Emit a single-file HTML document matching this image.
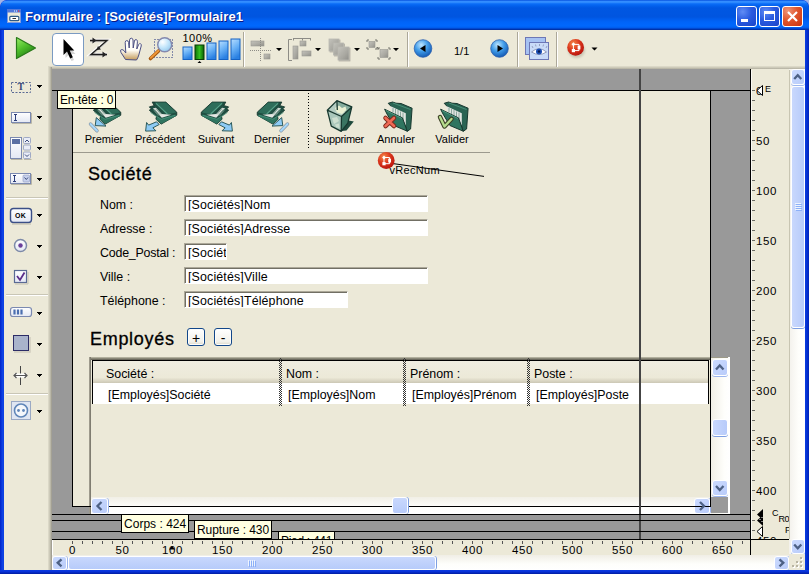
<!DOCTYPE html>
<html lang="fr">
<head>
<meta charset="utf-8">
<title>Formulaire : [Sociétés]Formulaire1</title>
<style>
*{box-sizing:border-box;margin:0;padding:0}
html,body{width:809px;height:574px;overflow:hidden;background:#a3b4e6}
body{position:relative;font-family:"Liberation Sans",sans-serif;font-size:11px;color:#000}
.a{position:absolute}
.t{position:absolute;white-space:nowrap;line-height:1}
#win{left:0;top:0;width:809px;height:574px;background:linear-gradient(to right,#0022c8 0,#0a3ce0 2px,#1046e6 3px,#0a3ce0 4px,#0a3ce0 805px,#0638dc 806px,#0022b8 809px);overflow:hidden;border-radius:7px 7px 0 0}
#title{left:0;top:0;width:809px;height:30px;border-radius:8px 8px 0 0;
 background:linear-gradient(to bottom,#0046d4 0,#2a84ff 1px,#3c96ff 2px,#1c7cfc 3px,#0a6cf6 4px,#0260ec 6px,#0057e2 8px,#0055e0 17px,#005cec 19px,#0064f8 22px,#0068fd 26px,#005eee 27.500px,#0048d0 28.500px,#0032a8 29.500px,#002c98 30px)}
#ttext{left:25px;top:10px;font-size:13px;font-weight:bold;color:#fff;text-shadow:1px 1px 0 #0a1883;letter-spacing:.08px}
.wb{position:absolute;top:6px;width:21px;height:21px;border:1px solid #fff;border-radius:3px;
 background:radial-gradient(circle at 30% 25%,#5f8cf5 0%,#2a5be0 45%,#1a43c8 100%)}
.wb.x{background:radial-gradient(circle at 25% 20%,#ee9478 0%,#e0562c 45%,#c8320f 100%)}
#client{left:4px;top:30px;width:801px;height:540px;background:#ece9d8}
#tbshadow{left:48px;top:66px;width:757px;height:4px;background:linear-gradient(to bottom,#e2dfce,#c6c3b2 50%,#97958a)}
.sep{position:absolute;top:32px;width:2px;height:36px;background:#aca899;border-right:1px solid #fff}
.dd{position:absolute;width:0;height:0;border-left:3px solid transparent;border-right:3px solid transparent;border-top:3px solid #000}
#work{left:52px;top:69px;width:698px;height:471px;background:#999;overflow:hidden}
.hl{position:absolute;height:1px;background:#000}
.vl{position:absolute;width:1px;background:#000}
.tip{position:absolute;background:#ffffe1;border:1px solid #000;font-size:12px;white-space:nowrap;line-height:18px;padding:0 2px;letter-spacing:-.2px;overflow:hidden}
.fld{position:absolute;height:17px;background:#fff;border-top:1px solid #aca899;border-left:1px solid #aca899;border-right:1px solid #fff;border-bottom:1px solid #fff;font-size:12.400px;letter-spacing:.15px;line-height:16px;white-space:nowrap;overflow:hidden}
.fld i{display:block;font-style:normal;border-top:1px solid #716f64;border-left:1px solid #716f64;height:15px;padding-left:2px}
.lbl{position:absolute;font-size:12.400px;white-space:nowrap;line-height:14px;margin-top:1px}
.btl{position:absolute;font-size:11px;white-space:nowrap;line-height:12px;text-align:center;width:60px}
.sbtn{position:absolute;background:linear-gradient(135deg,#cbdafe,#b9ccfa);border:1px solid #fff;border-radius:3px;box-shadow:0 1px 0 #9db6ee}
.sbtn.h{box-shadow:1px 0 0 #9db6ee}
.thumb{position:absolute;background:linear-gradient(to right,#c9d8fd,#b7cbfa);border:1px solid #fff;border-radius:3px;box-shadow:0 1px 0 #7e9fe2}
.thumbh{position:absolute;background:linear-gradient(to bottom,#c9d8fd,#b7cbfa);border:1px solid #fff;border-radius:3px;box-shadow:1px 0 0 #7e9fe2}
.pm{width:18px;height:18px;border:1px solid #12478a;border-radius:3px;background:linear-gradient(to bottom,#fff,#f2f1ea 80%,#d9d6c8);font-size:14px;line-height:19px;text-align:center;overflow:hidden;box-shadow:inset 0 0 0 1px #fdfdfb}
.cs{top:358px;width:3px;height:48px;background-image:linear-gradient(45deg,#333 25%,transparent 25%,transparent 75%,#333 75%),linear-gradient(45deg,#333 25%,transparent 25%,transparent 75%,#333 75%);background-size:2px 2px;background-position:0 0,1px 1px}
.rl{position:absolute;font-size:11.500px;line-height:1;white-space:nowrap;letter-spacing:.6px}
</style>
</head>
<body>
<div id="win" class="a">
 <div id="title" class="a"></div>
 <div id="ttext" class="t">Formulaire : [Sociétés]Formulaire1</div>
 <div class="wb" style="left:736px"></div>
 <div class="wb" style="left:759px"></div>
 <div class="wb x" style="left:782px"></div>
 <svg class="a" style="left:0;top:0" width="809" height="30" viewBox="0 0 809 30">
  <rect x="741" y="19" width="7" height="3" fill="#fff"/>
  <rect x="764.5" y="11.500" width="10" height="9" fill="none" stroke="#fff" stroke-width="1"/><rect x="764" y="11" width="11" height="3" fill="#fff"/>
  <path d="M788 12L797 21M797 12L788 21" stroke="#fff" stroke-width="2.200"/>
  <rect x="7.500" y="9.500" width="13" height="13" fill="#ece9d8" stroke="#7f9ae0"/>
  <rect x="7" y="9" width="14" height="3.500" fill="#4f78dc"/>
  <rect x="9.800" y="16.300" width="9" height="4.400" rx="1" fill="#fff" stroke="#2d5a88" stroke-width="1.200"/>
  <rect x="12.500" y="18" width="3.500" height="1" fill="#333"/>
  <rect x="18" y="10.500" width="1.200" height="1.200" fill="#f33"/><rect x="16" y="10.500" width="1" height="1" fill="#fff"/><rect x="14" y="10.500" width="1" height="1" fill="#fff"/>
 </svg>
 <div class="a" style="left:0;top:570px;width:809px;height:4px;background:linear-gradient(to bottom,#0a3ce0,#0831d9 40%,#001da0)"></div>
 <div id="client" class="a"></div>
 <div id="tbshadow" class="a"></div>
 <!-- toolbar -->
 <svg class="a" style="left:4px;top:30px" width="801" height="38" viewBox="4 30 801 38">
  <defs>
   <linearGradient id="gp" x1="0" y1="0" x2=".6" y2="1"><stop offset="0" stop-color="#9bee66"/><stop offset=".5" stop-color="#4fbf2c"/><stop offset="1" stop-color="#1f7a12"/></linearGradient>
   <linearGradient id="gb" x1="0" y1="0" x2=".35" y2="1"><stop offset="0" stop-color="#b9deff"/><stop offset=".5" stop-color="#6db4f7"/><stop offset="1" stop-color="#2a80e2"/></linearGradient>
   <linearGradient id="gg" x1="0" y1="0" x2="1" y2="0"><stop offset="0" stop-color="#0d7208"/><stop offset=".5" stop-color="#35c020"/><stop offset="1" stop-color="#0a5f06"/></linearGradient>
   <radialGradient id="gn" cx=".4" cy=".3" r=".8"><stop offset="0" stop-color="#bfe6ff"/><stop offset=".45" stop-color="#3f9be8"/><stop offset="1" stop-color="#0a4aa6"/></radialGradient>
   <radialGradient id="gl" cx=".35" cy=".3" r=".8"><stop offset="0" stop-color="#ffffff"/><stop offset=".5" stop-color="#c4e6fb"/><stop offset="1" stop-color="#8ec4ea"/></radialGradient>
   <linearGradient id="gd" x1="0" y1="0" x2="1" y2="1"><stop offset="0" stop-color="#c4c3bc"/><stop offset=".6" stop-color="#a9a8a1"/><stop offset="1" stop-color="#8f8e88"/></linearGradient><filter id="ds" x="-30%" y="-30%" width="170%" height="170%"><feDropShadow dx="1" dy="1" stdDeviation=".7" flood-color="#6a6960" flood-opacity=".45"/></filter>
   <linearGradient id="gh" x1="0" y1="0" x2="0" y2="1"><stop offset="0" stop-color="#fff"/><stop offset=".55" stop-color="#fffdf6"/><stop offset="1" stop-color="#c39a5a"/></linearGradient>
   <radialGradient id="rb2" cx=".36" cy=".28" r=".8"><stop offset="0" stop-color="#f58a4a"/><stop offset=".45" stop-color="#dc3a1e"/><stop offset=".85" stop-color="#c01a10"/><stop offset="1" stop-color="#a30d0d"/></radialGradient><filter id="bl" x="-50%" y="-50%" width="200%" height="200%"><feGaussianBlur stdDeviation="1.300"/></filter>
  </defs>
  <!-- play -->
  <path d="M16.5 37.5 L35.5 48 L16.5 58.5 Z" fill="url(#gp)" stroke="#2a7a1a" stroke-width="1.2" stroke-linejoin="round"/>
  <!-- selected arrow button -->
  <rect x="52.5" y="33.5" width="31" height="32" rx="3.5" fill="#fff" stroke="#7a9ac2"/>
  <path d="M65.5 43 L65.5 58 L68.6 55 L71.5 61 L74 60 L71.2 54 L75.5 54 Z" fill="#b9b9b9" opacity=".6"/>
  <path d="M63.5 39 L63.5 55 L67 51.6 L70.2 58.5 L72.8 57.3 L69.7 50.6 L74.3 50.4 Z" fill="#000"/>
  <!-- Z tool -->
  <g stroke="#fff" stroke-width="3.600" fill="none"><path d="M90 40.500H107L91 54.500H107"/></g>
  <g stroke="#b5b4aa" stroke-width="2.400" fill="none" opacity=".7"><path d="M90 41H107L91 55H107"/></g>
  <g stroke="#1c1c1c" stroke-width="1.300" fill="none"><path d="M90 40.500H107L91 54.500H107"/></g>
  <path d="M96.5 40.5 L92.5 37.5 V43.5 Z M96.5 50 L101 49.5 L98 46 Z M106.5 54.5 L102.5 51.5 V57.5 Z" fill="#222"/>
  <!-- hand -->
  <path d="M125.5 59.5 L121 52.5 Q119.5 49.5 122 49.5 Q124 49.8 125.8 53 L125.2 42.5 Q125.3 40.6 126.8 40.6 Q128.3 40.6 128.6 42.5 L129.2 48 L129.6 40 Q129.8 38.2 131.3 38.2 Q132.8 38.2 133 40 L133.2 48 L134.4 41 Q134.8 39.4 136.2 39.6 Q137.6 39.9 137.4 41.8 L136.8 49 L138.6 44.6 Q139.4 43.2 140.5 43.7 Q141.6 44.3 141.2 46 L138.8 55 Q138 58 136.5 60 Z" fill="url(#gh)" stroke="#4b4f83" stroke-width="1"/>
  <!-- magnifier -->
  <rect x="154.5" y="39.5" width="18" height="18" fill="none" stroke="#1b2a7a" stroke-width="1" stroke-dasharray="1 2"/>
  <path d="M158.5 51 L150.5 58.5" stroke="#a85a10" stroke-width="3.6" stroke-linecap="round"/>
  <path d="M158.5 50.6 L150.8 57.8" stroke="#f29a3a" stroke-width="1.8" stroke-linecap="round"/>
  <circle cx="164.7" cy="44.8" r="7" fill="url(#gl)" stroke="#8589ad" stroke-width="1.4"/>
  <!-- zoom bars -->
  <rect x="183" y="47" width="9" height="12.500" fill="url(#gb)" stroke="#1562c4"/>
  <rect x="195" y="45" width="9" height="14.500" fill="url(#gg)" stroke="#063d04"/>
  <rect x="207" y="43" width="9" height="16.500" fill="url(#gb)" stroke="#1562c4"/>
  <rect x="219" y="41" width="9" height="18.500" fill="url(#gb)" stroke="#1562c4"/>
  <rect x="231" y="39" width="9" height="20.500" fill="url(#gb)" stroke="#1562c4"/>
  <path d="M197.5 63 L199.5 61 L201.5 63 Z" fill="#000"/>
  <!-- separators -->
  <g stroke="#aca899"><path d="M243.5 32V67M407.5 32V67M517.5 32V67M556.5 32V67"/></g>
  <g stroke="#fff"><path d="M244.5 32V67M408.5 32V67M518.5 32V67M557.5 32V67"/></g>
  <!-- align (disabled) -->
  <g fill="url(#gd)" stroke="#9a9993" stroke-width=".6">
   <rect x="251" y="41" width="13" height="5"/><rect x="264" y="54" width="6" height="5"/>
  </g>
  <path d="M260.5 38V62M250 50.5H272" stroke="#8d8c86" stroke-dasharray="1 1" fill="none"/>
  <!-- distribute (disabled) -->
  <path d="M292 39.500H288.500V60.500H292M293 38.500H311M293.500 38.500V40.500M302.500 38.500V40.500M310.500 38.500V40.500" stroke="#8d8c86" fill="none"/>
  <g fill="url(#gd)" stroke="#9a9993" stroke-width=".6">
   <rect x="293" y="46" width="5" height="13"/><rect x="300" y="41" width="6" height="5"/><rect x="302" y="51" width="9" height="5"/>
  </g>
  <!-- layers (disabled) -->
  <g fill="url(#gd)" stroke="#b9b8b1" stroke-width=".8" filter="url(#ds)">
   <rect x="329" y="39" width="10" height="12"/><rect x="333.5" y="43" width="10" height="12"/><rect x="338" y="47" width="11" height="13"/>
  </g>
  <!-- group (disabled) -->
  <g fill="url(#gd)" stroke="#9a9993" stroke-width=".6">
   <rect x="369" y="41.5" width="6" height="6"/><rect x="380" y="49.5" width="8" height="8"/>
  </g>
  <path d="M367 42V40H369M375 40H377V42M367 47V49H369M375 49H377V47 M378 50V48H380M388 48H390V50M378 57V59H380M388 59H390V57 M377 47L379 49" stroke="#77766f" fill="none"/>
  <!-- dropdown arrows -->
  <path d="M276 48H282L279 51ZM315 48H321L318 51ZM354 48H360L357 51ZM393 48H399L396 51ZM591.500 47.500H597.500L594.500 50.500Z" fill="#000"/>
  <!-- nav -->
  <circle cx="423" cy="48.5" r="8.8" fill="url(#gn)" stroke="#2b5fae" stroke-width=".8"/>
  <path d="M425.5 45 V52 L420 48.5 Z" fill="#000"/>
  <circle cx="499.5" cy="48.5" r="8.8" fill="url(#gn)" stroke="#2b5fae" stroke-width=".8"/>
  <path d="M497.5 45 V52 L503 48.5 Z" fill="#000"/>
  <!-- eye -->
  <rect x="525.500" y="37.500" width="20" height="17" fill="#a6c2f2" stroke="#6d77b5"/>
  <rect x="529.500" y="42.500" width="19" height="17" fill="#c9dbf8" stroke="#6d77b5"/>
  <path d="M531.500 52Q539 45.500 546.500 52Q539 57 531.500 52Z" fill="#fff" stroke="#7e86a8" stroke-width=".8"/>
  <circle cx="539" cy="51.500" r="3" fill="#1c4fb5"/><circle cx="539" cy="51.500" r="1.200" fill="#081b4d"/>
  <path d="M533 48L532 46M536 46.5L535.5 44.5M539.5 46V44M543 46.5L543.5 44.5M546 48L547 46" stroke="#7e86a8" stroke-width=".7"/>
  <!-- red ball -->
  <ellipse cx="576.500" cy="50.500" rx="8.500" ry="7.500" fill="#8a8672" opacity=".35" filter="url(#bl)"/>
  <circle cx="575.600" cy="47.400" r="8.400" fill="url(#rb2)"/>
  <g id="ballg"><path d="M573.400 44.400H579V50.600H573.400M573.400 44V51" stroke="#fff" stroke-width="1" fill="none"/>
  <path d="M573.400 42.300L575.300 44.300L573.400 46.300L571.500 44.300Z" fill="#fff"/><rect x="571.800" y="49" width="3.200" height="3.200" fill="#fff"/><rect x="577.600" y="45.600" width="2.800" height="3.800" fill="#fff"/></g>
 </svg>
 <div class="t" style="left:182.500px;top:33px;font-size:11px;letter-spacing:.5px">100%</div>
 <div class="t" style="left:454px;top:46px;font-size:11px">1/1</div>
 <!-- palette -->
 <svg class="a" style="left:4px;top:69px" width="44" height="501" viewBox="4 69 44 501">
  <defs>
   <linearGradient id="pbx" x1="0" y1="0" x2="0" y2="1"><stop offset="0" stop-color="#fff"/><stop offset="1" stop-color="#e4e8f4"/></linearGradient>
  </defs>
  <!-- arrows -->
  <path d="M37 85h5v1h-1v1h-1v1h-1v-1h-1v-1h-1zM37 116h5v1h-1v1h-1v1h-1v-1h-1v-1h-1zM37 147h5v1h-1v1h-1v1h-1v-1h-1v-1h-1zM37 178h5v1h-1v1h-1v1h-1v-1h-1v-1h-1zM37 214h5v1h-1v1h-1v1h-1v-1h-1v-1h-1zM37 245h5v1h-1v1h-1v1h-1v-1h-1v-1h-1zM37 276h5v1h-1v1h-1v1h-1v-1h-1v-1h-1zM37 312h5v1h-1v1h-1v1h-1v-1h-1v-1h-1zM37 343h5v1h-1v1h-1v1h-1v-1h-1v-1h-1zM37 374h5v1h-1v1h-1v1h-1v-1h-1v-1h-1zM37 410h5v1h-1v1h-1v1h-1v-1h-1v-1h-1z" fill="#000"/>
  <!-- separators -->
  <g stroke="#c9c6b6"><path d="M6 197.5H48M6 294.5H48M6 393.5H48"/></g>
  <g stroke="#fff"><path d="M6 198.5H48M6 295.5H48M6 394.5H48"/></g>
  <!-- 1 text -->
  <rect x="11.5" y="82.5" width="19" height="10" fill="none" stroke="#5a6a94" stroke-dasharray="2 1.5"/>
  <!-- 2 input -->
  <rect x="11.5" y="112.5" width="19" height="10" fill="url(#pbx)" stroke="#7b89b0"/>
  <path d="M12 123.5H31.5V113" stroke="#b9b6a6" fill="none"/>
  <path d="M14 114.5H17M14 120.5H17M15.5 114.5V120.5" stroke="#2c3e7a" fill="none"/>
  <!-- 3 listbox -->
  <rect x="10.500" y="137.500" width="11" height="21" fill="url(#pbx)" stroke="#7b89b0"/>
  <rect x="12" y="139" width="8" height="5" fill="#5a6fa3"/>
  <g fill="#e9ecf6" stroke="#8d99bd" stroke-width=".8"><rect x="23.500" y="137.500" width="7" height="6" rx="1"/><rect x="23.500" y="145" width="7" height="5" rx="1"/><rect x="23.500" y="152" width="7" height="6.500" rx="1"/></g>
  <path d="M25 142L27 140L29 142M25 154.500L27 156.500L29 154.500" stroke="#3c4c7c" fill="none"/>
  <path d="M11 159.500H22.500M24 159.500H31.500" stroke="#b9b6a6"/>
  <!-- 4 combo -->
  <rect x="10.500" y="173.500" width="20" height="10" fill="url(#pbx)" stroke="#7b89b0"/>
  <rect x="23" y="175" width="6.500" height="7" rx="1" fill="#c6d0ec" stroke="#8d99bd" stroke-width=".6"/>
  <path d="M24.500 177.500L26.300 179.500L28 177.500" stroke="#3c4c7c" fill="none"/>
  <path d="M13 175.500H16M13 181.500H16M14.500 175.500V181.500" stroke="#2c3e7a" fill="none"/>
  <path d="M11 184.500H31.500V174" stroke="#b9b6a6" fill="none"/>
  <!-- 5 ok button -->
  <rect x="10.500" y="208.500" width="21" height="14" rx="3" fill="url(#pbx)" stroke="#3b4f87" stroke-width="1.400"/>
  <path d="M12 224H31" stroke="#b9b6a6"/>
  <!-- 6 radio -->
  <circle cx="20.500" cy="245.500" r="6" fill="url(#pbx)" stroke="#7d8aa8" stroke-width="1.500"/>
  <circle cx="20.500" cy="245.500" r="2.200" fill="#6a3f9a"/>
  <!-- 7 checkbox -->
  <rect x="14.500" y="270.500" width="12" height="12" fill="url(#pbx)" stroke="#5a6a94" stroke-width="1.200"/>
  <path d="M15 284H28V272" stroke="#c4c1b1" fill="none"/>
  <path d="M17 276L20 280L24.500 272.500" stroke="#5b2d8a" stroke-width="1.800" fill="none"/>
  <!-- 8 progress -->
  <rect x="10.500" y="307.500" width="21" height="9" rx="2.500" fill="url(#pbx)" stroke="#7b89b0" stroke-width="1.200"/>
  <path d="M14.500 309.500V314.500M18 309.500V314.500M21.500 309.500V314.500" stroke="#4b6fb0" stroke-width="2.200"/>
  <!-- 9 square -->
  <rect x="13.500" y="335.500" width="15" height="15" fill="#a9b3cb" stroke="#2c2c66" stroke-width="1"/>
  <path d="M14 352H30V337" stroke="#cfccbd" fill="none" stroke-width="1.500"/>
  <!-- 10 splitter -->
  <path d="M20.500 366V385" stroke="#444"/>
  <path d="M14 375.500H27" stroke="#fff" stroke-width="4"/>
  <path d="M14.500 375.500H26.500M16.500 373L14 375.500L16.500 378M24.500 373L27 375.500L24.500 378" stroke="#555" fill="none" stroke-width="1.200"/>
  <!-- 11 plugin -->
  <rect x="11.500" y="401.500" width="19" height="18" fill="#dfe6f2" stroke="#9aa9c4"/>
  <circle cx="21" cy="410.500" r="6.500" fill="#f4f7fb" stroke="#5f86b8" stroke-width="1.600"/>
  <circle cx="18.500" cy="410.500" r="1.400" fill="#5f86b8"/><circle cx="23.500" cy="410.500" r="1.400" fill="#5f86b8"/>
 </svg>
 <div class="t" style="left:17.500px;top:82px;font-size:10px;font-weight:bold;font-family:'Liberation Serif',serif;color:#3b4a78">T</div>
 <div class="t" style="left:15px;top:212px;font-size:7px;font-weight:bold;letter-spacing:.3px">OK</div>
 <div class="a" style="left:52px;top:69px;width:698px;height:471px;background:#999"></div>
 <div class="a" style="left:48px;top:67px;width:4px;height:503px;background:linear-gradient(to right,#e2dfce,#c6c3b2 50%,#97958a)"></div>
 <!-- form page -->
 <div class="a" style="left:73px;top:91px;width:637px;height:415px;background:#ece9d8"></div>
 <div class="hl" style="left:52px;top:90px;width:698px"></div>
 <div class="vl" style="left:72px;top:90px;height:417px"></div>
 <!-- header buttons -->
 <svg class="a" style="left:72px;top:91px" width="420" height="62" viewBox="72 91 420 62">
  <defs>
   <linearGradient id="gf" x1="0" y1="0" x2="1" y2="1"><stop offset="0" stop-color="#3f8a73"/><stop offset="1" stop-color="#1d4d40"/></linearGradient>
   <g id="fold">
    <path d="M3.2 1.100L16.800 1.100L27.750 11.200L27.750 14.200L12.200 23.100L6.900 18.200L7.500 15.500L0.300 9.200L2.300 7.900L0.300 5.900L5.200 4.600Z" fill="#1f4f42" stroke="#17382f" stroke-width=".9" stroke-linejoin="round"/>
    <path d="M5.900 1.600L16.800 1.400L27.300 11.500L17.500 13.400Z" fill="#2e6d5a"/>
    <path d="M7 2.300L18.300 12.800" stroke="#5aa58c" stroke-width="1.100"/>
    <path d="M3.900 7.600L6.900 6.700L12.800 13L22.500 13.700L12.800 16.700Z" fill="#e3e6e2"/>
    <path d="M5.500 8.200L10.500 14.300M7 7.600L11.800 13.300M4.800 9.300L9.400 14.800" stroke="#6d9485" stroke-width=".8"/>
    <path d="M0.900 10.700L12.200 17.800L26.400 13.600L27.300 15L12.200 22.700L7.300 18.400L8 15.700Z" fill="#2f7560"/>
    <path d="M1.500 11.500L12.200 18.300L26 14.300" stroke="#4f9a82" stroke-width=".7" fill="none"/>
   </g>
   <g id="foldr"><use href="#fold" transform="translate(28,0) scale(-1,1)"/></g>
   <g id="fold2">
    <path d="M4.200 2.300L8.600 1L12 2.200L17 2.500L28.100 7.200L26.600 28L23.100 30.400L20 19Z" fill="#2a6453" stroke="#17382f" stroke-width="1" stroke-linejoin="round"/>
    <path d="M9 2L26.500 8.500" stroke="#4f9a82" stroke-width=".8"/>
    <path d="M6.200 4.900L21.800 12.200L21.800 25L18.500 16.900L7.600 10.900Z" fill="#e1e5e1"/>
    <path d="M9 7V11.500M11.500 8V13M14 9V14.500M16.500 10.500V16M19 11.500V18" stroke="#8aa89c" stroke-width="1"/>
    <path d="M0.600 8.200L18.500 16.900L23.100 30.100L9.900 24.500L3 13Z" fill="#2f7560" stroke="#17382f" stroke-width="1" stroke-linejoin="round"/>
    <path d="M2 9.500L18 17.500" stroke="#5aa58c" stroke-width=".8"/>
   </g>
  </defs>
  <!-- Premier -->
  <use href="#fold" x="93" y="101"/>
  <path d="M96.300 117.600L95.200 125.600L106 126.100Z" fill="#8ecbf5" stroke="#1d4d4d" stroke-width=".9" stroke-linejoin="round"/>
  <path d="M90.500 124L97 130.700" stroke="#8a9aa8" stroke-width="3.400" stroke-linecap="round"/>
  <path d="M90.500 124L97 130.700" stroke="#a6d8fb" stroke-width="2" stroke-linecap="round"/>
  <!-- Précédent -->
  <use href="#fold" x="149" y="101"/>
  <path d="M145.600 131.100L146.600 122.500L148.600 125.100L156.500 121.800L159.200 124.500L152.900 127.800L155.900 130.800Z" fill="#8ecbf5" stroke="#1d4d4d" stroke-width=".9" stroke-linejoin="round"/>
  <!-- Suivant -->
  <use href="#foldr" x="201" y="101"/>
  <path d="M232.4 131.1L231.4 122.5L229.4 125.1L221.5 121.8L218.8 124.5L225.1 127.8L222.1 130.8Z" fill="#8ecbf5" stroke="#1d4d4d" stroke-width=".9" stroke-linejoin="round"/>
  <!-- Dernier -->
  <use href="#foldr" x="257" y="101"/>
  <path d="M281.7 117.6L282.8 125.6L272.0 126.1Z" fill="#8ecbf5" stroke="#1d4d4d" stroke-width=".9" stroke-linejoin="round"/>
  <path d="M287.5 124.0L281.0 130.7" stroke="#8a9aa8" stroke-width="3.400" stroke-linecap="round"/>
  <path d="M287.5 124.0L281.0 130.7" stroke="#a6d8fb" stroke-width="2" stroke-linecap="round"/>
  <!-- dotted sep -->
  <path d="M308.5 93 V148" stroke="#000" stroke-width="1" stroke-dasharray="1 2"/>
  <!-- Supprimer: trash -->
  <path d="M348.500 120.500L353.800 121.500L346.500 130.400L341.500 131Z" fill="#1f4a3d"/>
  <path d="M327.300 110.200L336.900 100.600L351.800 106.900L341.500 116.500Z" fill="#b4cdc2"/>
  <path d="M336.900 100.600L351.800 106.900L346 112L338 112Z" fill="#86ad9e"/>
  <path d="M335 108L339 105.500L342 108L345.500 106.500L346.500 110L342 114L337 112.500Z" fill="#e9f0d2"/>
  <path d="M327.300 110.200L341.500 116.500L341.200 131.400L331.300 126.100Z" fill="#a9c7bb"/>
  <path d="M332 118L337 117L339 121L334 124ZM335 124.500L339 123.500L339.500 128L336 127Z" fill="#d6e5d6" opacity=".8"/>
  <path d="M341.500 116.500L351.800 106.900L347.800 123.200L341.200 131.400Z" fill="#3a7562"/>
  <path d="M327.300 110.200L336.900 100.600L351.800 106.900L347.800 123.200L341.200 131.400L331.300 126.100ZM327.300 110.200L341.500 116.500L351.800 106.900M341.500 116.500L341.200 131.400M336.900 100.600L337.300 110" fill="none" stroke="#17382f" stroke-width="1.300" stroke-linejoin="round"/>
  <!-- Annuler -->
  <use href="#fold2" x="384" y="101"/>
  <path d="M385.500 118L394 126M394 118L385.500 126" stroke="#7a2a1c" stroke-width="4.5" stroke-linecap="round"/>
  <path d="M385.500 118L394 126M394 118L385.500 126" stroke="#ef6a55" stroke-width="2.6" stroke-linecap="round"/>
  <!-- Valider -->
  <use href="#fold2" x="440" y="101"/>
  <path d="M440 117L444.500 126.500L451.500 119" fill="none" stroke="#3a3f24" stroke-width="4.5" stroke-linejoin="round" stroke-linecap="round"/>
  <path d="M440 117L444.500 126.500L451.500 119" fill="none" stroke="#b5db8c" stroke-width="2.4" stroke-linejoin="round" stroke-linecap="round"/>
  <!-- rule -->
  <path d="M73 152.500H490" stroke="#9c9a8e" stroke-width="1"/><path d="M73 153.500H490" stroke="#fbfaf5" stroke-width="1"/>
 </svg>
 <div class="btl" style="left:74px;top:133px">Premier</div>
 <div class="btl" style="left:130px;top:133px">Précédent</div>
 <div class="btl" style="left:186px;top:133px">Suivant</div>
 <div class="btl" style="left:242px;top:133px">Dernier</div>
 <div class="btl" style="left:310px;top:133px;letter-spacing:-.33px">Supprimer</div>
 <div class="btl" style="left:366px;top:133px">Annuler</div>
 <div class="btl" style="left:422px;top:133px">Valider</div>
 <!-- vRecNum -->
 <div class="t" style="left:389.500px;top:165px;font-size:11px;letter-spacing:.3px">vRecNum</div>
 <svg class="a" style="left:376px;top:150px" width="112" height="30" viewBox="376 150 112 30">
  <defs><radialGradient id="rb" cx=".38" cy=".3" r=".75"><stop offset="0" stop-color="#ff8d78"/><stop offset=".45" stop-color="#e2321c"/><stop offset="1" stop-color="#8e1206"/></radialGradient></defs>
  <path d="M391 163.3 L484 176.4" stroke="#000" stroke-width="1"/>
  <circle cx="386.200" cy="160.500" r="8.400" fill="url(#rb2)"/>
  <use href="#ballg" transform="translate(-189.400,113.100)"/>
 </svg>
 <!-- Société -->
 <div class="t" style="left:88px;top:165px;font-size:18px;letter-spacing:.6px;-webkit-text-stroke:.3px #000">Société</div>
 <div class="lbl" style="left:100px;top:197px">Nom :</div>
 <div class="lbl" style="left:100px;top:221px">Adresse :</div>
 <div class="lbl" style="left:100px;top:245px;letter-spacing:-.2px">Code_Postal :</div>
 <div class="lbl" style="left:100px;top:269px">Ville :</div>
 <div class="lbl" style="left:100px;top:293px">Téléphone :</div>
 <div class="fld" style="left:184px;top:195px;width:244px"><i>[Sociétés]Nom</i></div>
 <div class="fld" style="left:184px;top:219px;width:244px"><i>[Sociétés]Adresse</i></div>
 <div class="fld" style="left:184px;top:243px;width:43px"><i><span style="display:block;width:38px;overflow:hidden">[Sociétés]Code_Postal</span></i></div>
 <div class="fld" style="left:184px;top:267px;width:244px"><i>[Sociétés]Ville</i></div>
 <div class="fld" style="left:184px;top:291px;width:164px"><i>[Sociétés]Téléphone</i></div>
 <!-- Employés -->
 <div class="t" style="left:90px;top:330px;font-size:18px;letter-spacing:.7px;-webkit-text-stroke:.3px #000">Employés</div>
 <div class="a pm" style="left:187px;top:328px">+</div>
 <div class="a pm" style="left:214px;top:328px">-</div>
 <!-- list box -->
 <div class="a" style="left:89px;top:357px;width:622px;height:3px;background:linear-gradient(to bottom,#c5c2b0,#8a8878 50%,#5c5a50)"></div>
 <div class="a" style="left:89px;top:357px;width:2px;height:158px;background:linear-gradient(to right,#aca899,#716f64)"></div>
 <div class="a" style="left:93px;top:361px;width:615px;height:22px;background:linear-gradient(to bottom,#efede0 0%,#ece9d8 75%,#dcd8c6 88%,#cbc7b5 100%)"></div>
 <div class="a" style="left:93px;top:383px;width:615px;height:21px;background:#fff"></div>
 <div class="hl" style="left:92px;top:360px;width:617px"></div>
 <div class="vl" style="left:92px;top:360px;height:44px"></div>
 <div class="vl" style="left:708px;top:360px;height:44px"></div>
 <div class="a cs" style="left:279px"></div>
 <div class="a cs" style="left:403px"></div>
 <div class="a cs" style="left:527px"></div>
 <div class="lbl" style="left:106px;top:366px">Société :</div>
 <div class="lbl" style="left:286px;top:366px">Nom :</div>
 <div class="lbl" style="left:410px;top:366px">Prénom :</div>
 <div class="lbl" style="left:534px;top:366px">Poste :</div>
 <div class="lbl" style="left:108px;top:387px">[Employés]Société</div>
 <div class="lbl" style="left:288px;top:387px">[Employés]Nom</div>
 <div class="lbl" style="left:412px;top:387px">[Employés]Prénom</div>
 <div class="lbl" style="left:536px;top:387px">[Employés]Poste</div>
 <!-- list vscroll -->
 <div class="a" style="left:711px;top:357px;width:19px;height:158px;background:linear-gradient(to right,#f1efe6,#fefefb 70%,#fff)"></div>
 <div class="a" style="left:711px;top:357px;width:17px;height:1px;background:#9d9a88"></div>
 <div class="a" style="left:711px;top:497px;width:17px;height:16px;background:#999"></div>
 <div class="sbtn" style="left:712px;top:359px;width:16px;height:17px"></div>
 <div class="sbtn" style="left:712px;top:480px;width:16px;height:16px"></div>
 <div class="thumb" style="left:712px;top:419px;width:16px;height:17px"></div>
 <svg class="a" style="left:712px;top:359px" width="16" height="138" viewBox="712 359 16 138"><path d="M716 369.500L719.750 365.500L723.500 369.500M716 486L719.750 490L723.500 486" fill="none" stroke="#4d6185" stroke-width="2.300"/></svg>
 <!-- list hscroll -->
 <div class="a" style="left:91px;top:497px;width:620px;height:17px;background:linear-gradient(to bottom,#f1efe6,#fefefb 60%,#fff)"></div>
 <div class="hl" style="left:72px;top:506px;width:639px"></div>
 <div class="sbtn h" style="left:91px;top:498px;width:17px;height:16px"></div>
 <div class="sbtn h" style="left:694px;top:498px;width:16px;height:16px"></div>
 <div class="hl" style="left:694px;top:506px;width:17px"></div>
 <div class="thumbh" style="left:392px;top:497px;width:16px;height:17px"></div>
 <svg class="a" style="left:91px;top:498px" width="620" height="16" viewBox="91 498 620 16"><path d="M101.500 502L97.500 506L101.500 510M700 502L704 506L700 510" fill="none" stroke="#4d6185" stroke-width="2.300"/></svg>
 <div class="vl" style="left:710px;top:90px;height:417px"></div>
 <!-- section markers -->
 <div class="a" style="left:640px;top:69px;width:2px;height:470px;background:#444;margin-left:-1px"></div>
 <div class="hl" style="left:52px;top:514px;width:698px"></div>
 <div class="hl" style="left:52px;top:520px;width:698px"></div>
 <div class="hl" style="left:52px;top:531px;width:698px"></div>
 <div class="tip" style="left:57px;top:90px;height:19px">En-tête : 0</div>
 <div class="tip" style="left:121px;top:514px;height:19px;letter-spacing:.02px">Corps : 424</div>
 <div class="tip" style="left:194px;top:520px;height:19px;letter-spacing:-.05px">Rupture : 430</div>
 <div class="tip" style="left:278px;top:531px;height:19px;letter-spacing:-.3px">Pied : 441</div>
 <div class="a" style="left:52px;top:539px;width:738px;height:17px;background:#ece9d8"></div>
 <div class="hl" style="left:52px;top:539px;width:738px"></div>
 <div class="a" style="left:52px;top:540px;width:1px;height:15px;background:#fff"></div>
 <div class="a" style="left:52px;top:555px;width:738px;height:1px;background:#fff"></div>
 <svg class="a" style="left:52px;top:540px" width="698" height="5" viewBox="52 540 698 5"><path d="M72.5 541V544M82.5 541V544M92.5 541V544M102.5 541V544M112.5 541V544M122.5 541V544M132.5 541V544M142.5 541V544M152.5 541V544M162.5 541V544M172.5 541V544M182.5 541V544M192.5 541V544M202.5 541V544M212.5 541V544M222.5 541V544M232.5 541V544M242.5 541V544M252.5 541V544M262.5 541V544M272.5 541V544M282.5 541V544M292.5 541V544M302.5 541V544M312.5 541V544M322.5 541V544M332.5 541V544M342.5 541V544M352.5 541V544M362.5 541V544M372.5 541V544M382.5 541V544M392.5 541V544M402.5 541V544M412.5 541V544M422.5 541V544M432.5 541V544M442.5 541V544M452.5 541V544M462.5 541V544M472.5 541V544M482.5 541V544M492.5 541V544M502.5 541V544M512.5 541V544M522.5 541V544M532.5 541V544M542.5 541V544M552.5 541V544M562.5 541V544M572.5 541V544M582.5 541V544M592.5 541V544M602.5 541V544M612.5 541V544M622.5 541V544M632.5 541V544M642.5 541V544M652.5 541V544M662.5 541V544M672.5 541V544M682.5 541V544M692.5 541V544M702.5 541V544M712.5 541V544M722.5 541V544M732.5 541V544M742.5 541V544" stroke="#555" stroke-width="1"/></svg>
 <div class="rl" style="left:72px;top:545px;width:40px;text-align:center;margin-left:-19.5px">0</div>
 <div class="rl" style="left:122px;top:545px;width:40px;text-align:center;margin-left:-19.5px">50</div>
 <div class="rl" style="left:172px;top:545px;width:40px;text-align:center;margin-left:-19.5px">100</div>
 <div class="rl" style="left:222px;top:545px;width:40px;text-align:center;margin-left:-19.5px">150</div>
 <div class="rl" style="left:272px;top:545px;width:40px;text-align:center;margin-left:-19.5px">200</div>
 <div class="rl" style="left:322px;top:545px;width:40px;text-align:center;margin-left:-19.5px">250</div>
 <div class="rl" style="left:372px;top:545px;width:40px;text-align:center;margin-left:-19.5px">300</div>
 <div class="rl" style="left:422px;top:545px;width:40px;text-align:center;margin-left:-19.5px">350</div>
 <div class="rl" style="left:472px;top:545px;width:40px;text-align:center;margin-left:-19.5px">400</div>
 <div class="rl" style="left:522px;top:545px;width:40px;text-align:center;margin-left:-19.5px">450</div>
 <div class="rl" style="left:572px;top:545px;width:40px;text-align:center;margin-left:-19.5px">500</div>
 <div class="rl" style="left:622px;top:545px;width:40px;text-align:center;margin-left:-19.5px">550</div>
 <div class="rl" style="left:672px;top:545px;width:40px;text-align:center;margin-left:-19.5px">600</div>
 <div class="rl" style="left:722px;top:545px;width:40px;text-align:center;margin-left:-19.5px">650</div>
 <svg class="a" style="left:167px;top:545px" width="10" height="5" viewBox="0 0 10 5"><path d="M2 4.5 L5 1 L8 4.5 Z" fill="#000"/></svg>
 <div class="a" style="left:750px;top:69px;width:40px;height:470px;background:#ece9d8"></div>
 <div class="vl" style="left:750px;top:69px;height:487px"></div>
 <div class="a" style="left:751px;top:70px;width:1px;height:469px;background:#fbfaf4"></div>
 <svg class="a" style="left:751px;top:69px" width="8" height="470" viewBox="751 69 8 470"><path d="M752 90.5H755M752 100.5H755M752 110.5H755M752 120.5H755M752 130.5H755M752 140.5H755M752 150.5H755M752 160.5H755M752 170.5H755M752 180.5H755M752 190.5H755M752 200.5H755M752 210.5H755M752 220.5H755M752 230.5H755M752 240.5H755M752 250.5H755M752 260.5H755M752 270.5H755M752 280.5H755M752 290.5H755M752 300.5H755M752 310.5H755M752 320.5H755M752 330.5H755M752 340.5H755M752 350.5H755M752 360.5H755M752 370.5H755M752 380.5H755M752 390.5H755M752 400.5H755M752 410.5H755M752 420.5H755M752 430.5H755M752 440.5H755M752 450.5H755M752 460.5H755M752 470.5H755M752 480.5H755M752 490.5H755M752 500.5H755M752 510.5H755M752 520.5H755M752 530.5H755" stroke="#6a6a64" stroke-width="1"/></svg>
 <div class="rl" style="left:756px;top:136px">50</div>
 <div class="rl" style="left:756px;top:186px">100</div>
 <div class="rl" style="left:756px;top:236px">150</div>
 <div class="rl" style="left:756px;top:286px">200</div>
 <div class="rl" style="left:756px;top:336px">250</div>
 <div class="rl" style="left:756px;top:386px">300</div>
 <div class="rl" style="left:756px;top:436px">350</div>
 <div class="rl" style="left:756px;top:486px">400</div>
 <!-- ruler markers -->
 <div class="rl" style="left:756px;top:86px">0</div>
 <div class="a" style="left:751px;top:509px;width:38px;height:30px;overflow:hidden">
  <div class="rl" style="left:5px;top:27px">450</div>
 </div>
 <svg class="a" style="left:751px;top:80px" width="39" height="460" viewBox="751 80 39 460">
  <path d="M757 90.500L762.500 85.500V95.500Z" fill="#fff" stroke="#000"/>
  <path d="M757 514.500L763 509V520Z" fill="#000"/>
  <path d="M757 520.500L763 515V526Z" fill="#000"/>
  <path d="M759.500 519.500h1M761.500 517.500h1M761.500 521.500h1" stroke="#fff"/>
  <path d="M757 531.500L762.500 526.500V536.500Z" fill="#fff" stroke="#000"/>
 </svg>
 <div class="t" style="left:765px;top:85px;font-size:9px">E</div>
 <div class="t" style="left:772px;top:509px;font-size:9px">C</div>
 <div class="a" style="left:751px;top:500px;width:39px;height:39px;overflow:hidden"><div class="t" style="left:27.500px;top:15px;font-size:9px;letter-spacing:-.6px">R0</div><div class="t" style="left:34px;top:26px;font-size:9px">P</div></div>
 <!-- main vscroll -->
 <div class="a" style="left:789px;top:69px;width:16px;height:487px;background:linear-gradient(to right,#f3f1ec,#fefefb 60%,#fff)"></div>
 <div class="a" style="left:789px;top:70px;width:1px;height:469px;background:#c8c5b2"></div>
 <div class="sbtn" style="left:791px;top:69px;width:14px;height:16px"></div>
 <div class="sbtn" style="left:791px;top:539px;width:14px;height:15px"></div>
 <div class="thumb" style="left:791px;top:86px;width:14px;height:242px"></div>
 <svg class="a" style="left:791px;top:69px" width="14" height="486" viewBox="791 69 14 486"><path d="M794.200 79L797.750 75.200L801.300 79M794.200 544.500L797.750 548.300L801.300 544.500" fill="none" stroke="#4d6185" stroke-width="2.300"/><path d="M795 203.500H801M795 205.500H801M795 207.500H801M795 209.500H801" stroke="#eef4fe"/><path d="M796 204.500H802M796 206.500H802M796 208.500H802M796 210.500H802" stroke="#8cb0f8"/></svg>
 <!-- main hscroll -->
 <div class="a" style="left:52px;top:555px;width:737px;height:15px;background:linear-gradient(to bottom,#f0eee6,#fefefb 60%,#fff)"></div>
 <div class="sbtn h" style="left:52px;top:556px;width:15px;height:14px"></div>
 <div class="sbtn h" style="left:774px;top:556px;width:15px;height:14px"></div>
 <div class="thumbh" style="left:68px;top:556px;width:368px;height:14px"></div>
 <svg class="a" style="left:52px;top:556px" width="753" height="14" viewBox="52 556 753 14"><path d="M61.500 559.300L57.700 562.800L61.500 566.300M779.500 559.300L783.300 562.800L779.500 566.300" fill="none" stroke="#4d6185" stroke-width="2.300"/><path d="M248.500 560V566M250.500 560V566M252.500 560V566M254.500 560V566" stroke="#eef4fe"/><path d="M249.500 561V567M251.500 561V567M253.500 561V567M255.500 561V567" stroke="#8cb0f8"/></svg>
 <!-- size grip -->
 <div class="a" style="left:789px;top:554px;width:16px;height:16px;background:#ece9d8"></div>
 <svg class="a" style="left:789px;top:554px" width="16" height="16" viewBox="0 0 16 16"><g fill="#fff"><rect x="12" y="4" width="2" height="2"/><rect x="8" y="8" width="2" height="2"/><rect x="12" y="8" width="2" height="2"/><rect x="4" y="12" width="2" height="2"/><rect x="8" y="12" width="2" height="2"/><rect x="12" y="12" width="2" height="2"/></g><g fill="#b8b4a2"><rect x="11" y="3" width="2" height="2"/><rect x="7" y="7" width="2" height="2"/><rect x="11" y="7" width="2" height="2"/><rect x="3" y="11" width="2" height="2"/><rect x="7" y="11" width="2" height="2"/><rect x="11" y="11" width="2" height="2"/></g></svg>
</div>
</body>
</html>
